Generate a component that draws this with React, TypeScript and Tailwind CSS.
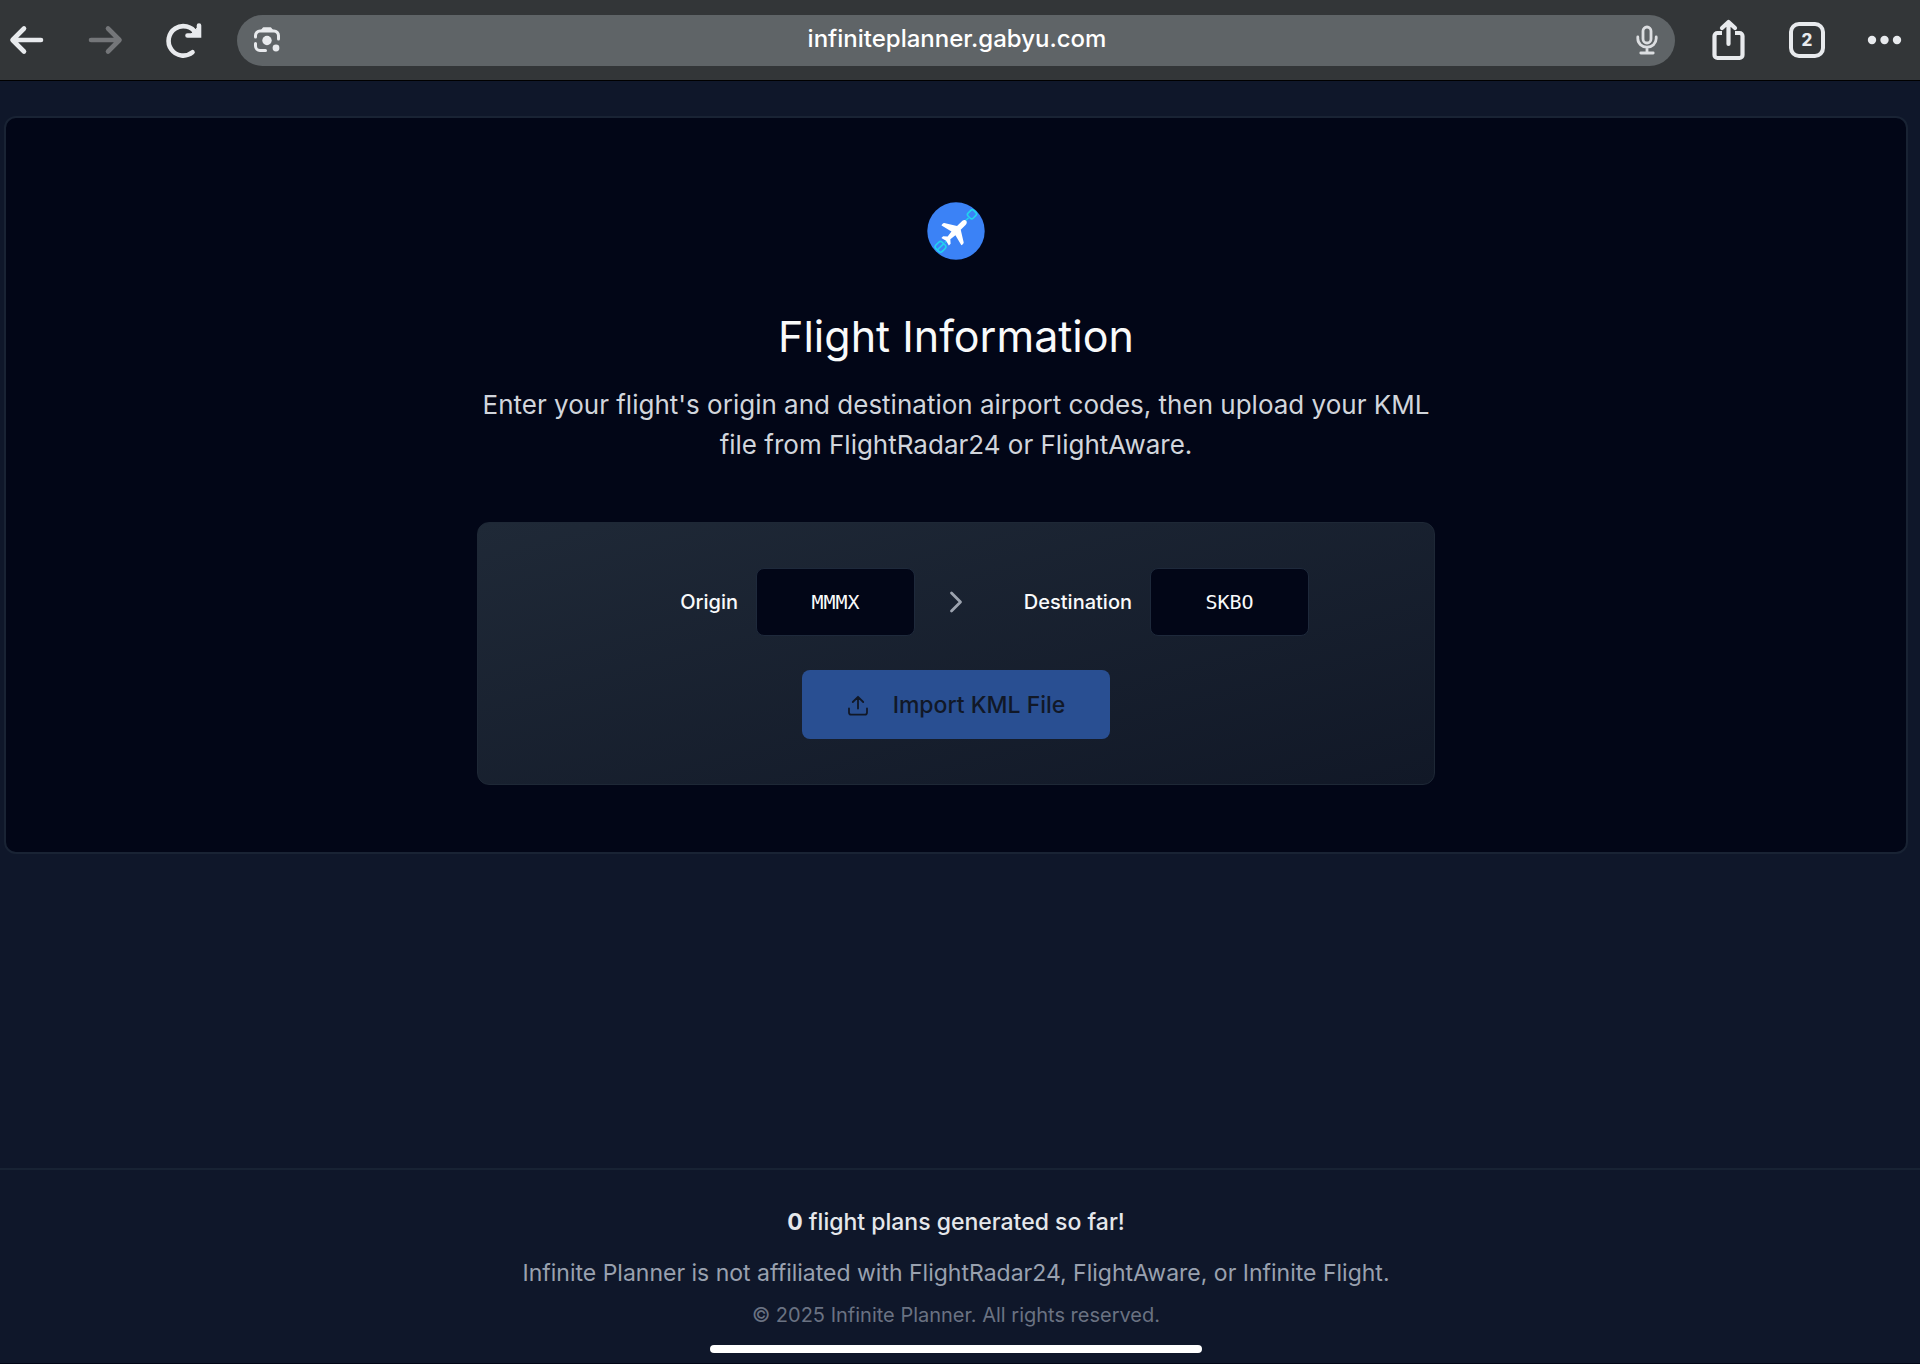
import { useState } from "react";
import type { ReactNode } from "react";

function BarButton({ label, children, disabled }: { label: string; children: ReactNode; disabled?: boolean }) {
  return (
    <button
      type="button"
      aria-label={label}
      disabled={disabled}
      className="flex h-12 w-[54px] shrink-0 items-center justify-center text-[#e8eaed] disabled:text-[#747679]"
    >
      {children}
    </button>
  );
}

function BrowserBar() {
  return (
    <header className="flex h-[81px] items-center gap-[27px] border-b border-black bg-[#333638] pr-2">
      <div className="flex gap-6">
        <BarButton label="Back">
          <svg width="36" height="36" viewBox="0 0 36 36" fill="none" stroke="currentColor" strokeWidth="4.6" strokeLinecap="round" strokeLinejoin="round">
            <path d="M32 18H4M15 6.500L3.500 18L15 29.500" />
          </svg>
        </BarButton>
        <BarButton label="Forward" disabled>
          <svg width="36" height="36" viewBox="0 0 36 36" fill="none" stroke="currentColor" strokeWidth="4.600" strokeLinecap="round" strokeLinejoin="round">
            <path d="M4 18H32M21 6.500L32.500 18L21 29.500" />
          </svg>
        </BarButton>
        <BarButton label="Reload">
          <svg width="38" height="38" viewBox="0 0 38 38" fill="none" stroke="currentColor" strokeWidth="4.600" strokeLinecap="round">
            <path d="M28.500 31.300A14.700 14.700 0 1 1 32 12.500" />
            <path d="M35 4.500V14.500H23.500" />
            <path d="M34.500 6V14H26.500Z" fill="currentColor" strokeWidth="1" />
          </svg>
        </BarButton>
      </div>

      <div className="flex h-[51px] min-w-0 flex-1 items-center rounded-full bg-[#5f6467] pr-3 pl-[14px]">
        <button type="button" aria-label="Search with camera" className="flex w-8 shrink-0 justify-center text-[#e8eaed]">
          <svg width="30" height="30" viewBox="0 0 30 30" fill="none" stroke="currentColor" strokeWidth="3" strokeLinecap="round">
            <path d="M3.500 12V10.500A4.500 4.500 0 0 1 8 6H22A4.500 4.500 0 0 1 26.500 10.500V14" />
            <path d="M3.500 18.500V21A4.500 4.500 0 0 0 8 25.500H13.500" />
            <path d="M9.500 5.500L11.500 3H18.500L20.500 5.500Z" fill="currentColor" strokeWidth="1.500" strokeLinejoin="round" />
            <circle cx="15" cy="15.500" r="4.700" fill="currentColor" stroke="none" />
            <circle cx="24" cy="23" r="3.400" fill="currentColor" stroke="none" />
          </svg>
        </button>
        <input
          type="text"
          aria-label="Address"
          defaultValue="infiniteplanner.gabyu.com"
          className="h-full min-w-0 flex-1 bg-transparent pb-1 text-center text-[24px] font-medium text-white outline-none"
        />
        <button type="button" aria-label="Voice search" className="flex w-8 shrink-0 justify-center text-[#dcdee1]">
          <svg width="24" height="32" viewBox="0 0 24 32" fill="none" stroke="currentColor" strokeWidth="2.800" strokeLinecap="round">
            <rect x="8" y="3" width="8" height="16" rx="4" />
            <path d="M2.800 13V14.500A9.200 8.700 0 0 0 21.200 14.500V13M12 23.500V28.500M5.800 29H18.200" />
          </svg>
        </button>
      </div>

      <div className="flex gap-6">
        <BarButton label="Share">
          <svg width="36" height="44" viewBox="0 0 36 44" fill="none" stroke="currentColor" strokeWidth="4.200" strokeLinecap="round" strokeLinejoin="round">
            <path d="M11 15H6.500A3 3 0 0 0 3.500 18V37A3 3 0 0 0 6.500 40H28.500A3 3 0 0 0 31.500 37V18A3 3 0 0 0 28.500 15H24" strokeLinecap="butt" />
            <path d="M17.500 26V4.500M11 10L17.500 4L24 10" />
          </svg>
        </BarButton>
        <BarButton label="2 open tabs">
          <span className="flex size-9 items-center justify-center rounded-[10px] border-4 border-[#e8eaed] text-[17px] leading-none font-extrabold">
            2
          </span>
        </BarButton>
        <BarButton label="More">
          <svg width="36" height="12" viewBox="0 0 36 12" fill="currentColor">
            <circle cx="5" cy="6" r="4.200" />
            <circle cx="17.500" cy="6" r="4.200" />
            <circle cx="30" cy="6" r="4.200" />
          </svg>
        </BarButton>
      </div>
    </header>
  );
}

function Logo() {
  return (
    <svg role="img" aria-label="Infinite Planner" width="58" height="58" viewBox="0 0 58 58">
      <circle cx="29" cy="29" r="28.700" fill="#3b82f6" />
      <g fill="none" stroke="#22d3ee" strokeWidth="1.600" strokeLinejoin="round">
        <path d="M38.500 18.500L41.500 16" />
        <path d="M21 37.500L18 40.500" />
        <rect x="-4" y="-3.600" width="8" height="7.200" rx="2" transform="translate(45 12.300) rotate(-45)" />
        <rect x="-4.500" y="-4.500" width="9" height="9" rx="2.500" transform="translate(13.500 44.800) rotate(-45)" />
        <path d="M10.300 48L16.700 41.600" />
      </g>
      <path
        transform="translate(28 29.800) rotate(45)"
        fill="#fff"
        d="M0 -15.800C1.700 -15.800 2.600 -14 2.600 -12V-5.500L13.800 1.500C14.600 2.200 14.600 4.500 14 5L2.800 2.200L1.900 8.500L5.300 11.500V14L0 12.600L-5.300 14V11.500L-1.900 8.500L-2.800 2.200L-14 5C-14.600 4.500 -14.600 2.200 -13.800 1.500L-2.600 -5.500V-12C-2.600 -14 -1.700 -15.800 0 -15.800Z"
      />
    </svg>
  );
}

function CodeField({ id, label, value, onChange }: { id: string; label: string; value: string; onChange: (v: string) => void }) {
  return (
    <div className="flex items-center gap-[18px]">
      <label htmlFor={id} className="w-[135px] text-right text-[20px] font-medium text-gray-50">
        {label}
      </label>
      <input
        id={id}
        type="text"
        maxLength={4}
        value={value}
        onChange={(e) => onChange(e.target.value.toUpperCase())}
        className="h-[68px] w-[159px] rounded-lg border border-[#1e293b] bg-[#020617] text-center font-['DejaVu_Sans_Mono',monospace] text-[20px] text-gray-50 outline-none"
      />
    </div>
  );
}

export default function App() {
  const [origin, setOrigin] = useState("MMMX");
  const [destination, setDestination] = useState("SKBO");

  return (
    <div className="flex min-h-screen flex-col bg-[#0f172a] font-['Inter',sans-serif]">
      <BrowserBar />

      <main className="flex-1 pt-[35px] pr-3 pl-1">
        <section className="flex flex-col items-center rounded-xl border-2 border-[#192334] bg-[#020617] px-8 pt-[84px] pb-[67px]">
          <Logo />
          <h1 className="mt-[50px] text-[43px] leading-[52px] text-gray-50">Flight Information</h1>
          <p className="mt-[23px] max-w-[958px] text-center text-[26px] leading-10 text-gray-300">
            Enter your flight's origin and destination airport codes, then upload your KML file from FlightRadar24 or FlightAware.
          </p>

          <form className="mt-[57px] flex w-full max-w-[958px] flex-col items-center rounded-xl border border-[#1e2836] bg-linear-to-br from-[#1f2937] to-[#111827] pt-[45px] pb-[45px]">
            <div className="flex items-center gap-7">
              <CodeField id="origin" label="Origin" value={origin} onChange={setOrigin} />
              <svg aria-hidden="true" width="26" height="26" viewBox="0 0 26 26" fill="none" stroke="#9ca3af" strokeWidth="2.800" strokeLinecap="round" strokeLinejoin="round">
                <path d="M8.500 4L17.500 13L8.500 22" />
              </svg>
              <CodeField id="destination" label="Destination" value={destination} onChange={setDestination} />
            </div>
            <button
              type="button"
              disabled
              className="mt-[34px] flex h-[69px] items-center gap-6 rounded-lg bg-[#294f92] px-[45px] pt-[2px] text-[23px] font-medium text-[#111827]"
            >
              <svg aria-hidden="true" width="22" height="22" viewBox="0 0 22 22" fill="none" stroke="currentColor" strokeWidth="1.800" strokeLinecap="round" strokeLinejoin="round">
                <path d="M2 13.500V17.500A2.200 2.200 0 0 0 4.200 19.700H17.800A2.200 2.200 0 0 0 20 17.500V13.500M11 13.500V2M5.800 7L11 1.800L16.200 7" />
              </svg>
              Import KML File
            </button>
          </form>
        </section>
      </main>

      <footer className="border-t-2 border-[#182334] pr-2 text-center">
        <p className="mt-[34px] text-[23px] leading-9 font-medium text-gray-200">
          <strong className="font-bold">0</strong> flight plans generated so far!
        </p>
        <p className="mt-[15px] text-[23px] leading-9 text-gray-400">
          Infinite Planner is not affiliated with FlightRadar24, FlightAware, or Infinite Flight.
        </p>
        <p className="mt-2 text-[20px] leading-8 text-gray-500">© 2025 Infinite Planner. All rights reserved.</p>
        <div className="mx-auto mt-[14px] mb-[10px] h-2 w-[492px] rounded-full bg-white" />
      </footer>
      <div className="h-px bg-[#020617]" />
    </div>
  );
}
